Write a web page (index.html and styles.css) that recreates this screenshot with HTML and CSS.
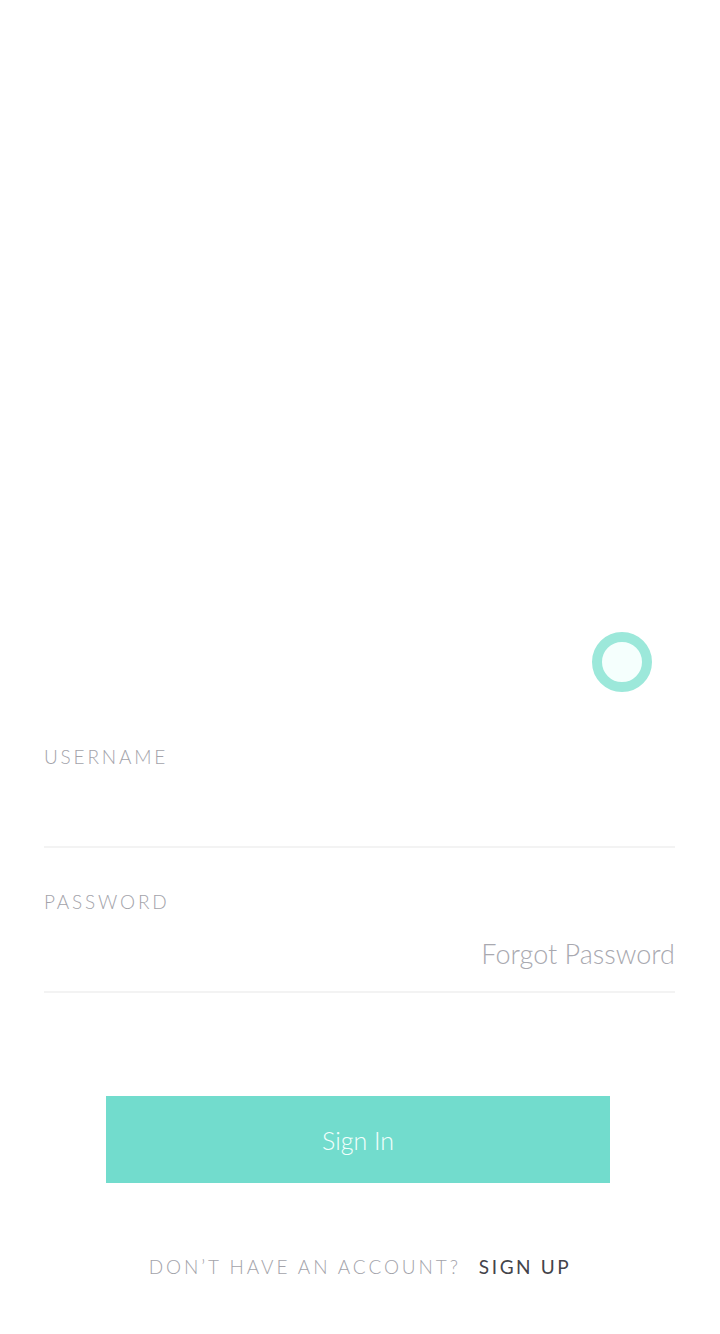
FILE: index.html
```html
<!DOCTYPE html>
<html>
<head>
<meta charset="utf-8">
<link rel="stylesheet" href="styles.css">
</head>
<body>
<div class="page">
  <div class="avatar-row">
    <div class="avatar"></div>
  </div>
  <div class="form">
    <div class="field">
      <div class="label">USERNAME</div>
      <div class="input"></div>
    </div>
    <div class="field">
      <div class="label">PASSWORD</div>
      <div class="input"><span class="forgot">Forgot Password</span></div>
    </div>
  </div>
  <div class="btn-row">
    <div class="btn">Sign In</div>
  </div>
  <div class="signup">
    <span class="muted">DON’T HAVE AN ACCOUNT?</span>
    <span class="dark">SIGN UP</span>
  </div>
</div>
</body>
</html>
```

FILE: styles.css
```css
html, body {
  margin: 0;
  padding: 0;
  background: #ffffff;
}
.page {
  width: 720px;
  height: 1334px;
  font-family: Lato, "Open Sans", sans-serif;
  display: flex;
  flex-direction: column;
}
.avatar-row {
  padding-top: 632px;
  padding-right: 68px;
  display: flex;
  justify-content: flex-end;
}
.avatar {
  width: 40px;
  height: 40px;
  border: 10px solid #9ce8da;
  border-radius: 50%;
  background: #f5fffd;
}
.form {
  padding: 53px 45px 0 44px;
}
.field {
  display: flex;
  flex-direction: column;
  margin-bottom: 42px;
}
.label {
  font-size: 19px;
  line-height: 24px;
  letter-spacing: 2.8px;
  color: #a3a3aa;
  font-weight: 300;
}
.input {
  height: 77px;
  border-bottom: 2px solid #f3f3f3;
  display: flex;
  justify-content: flex-end;
  align-items: flex-end;
}
.forgot {
  font-size: 27px;
  line-height: 32px;
  color: #a9a9b0;
  font-weight: 300;
  padding-bottom: 21px;
}
.btn-row {
  padding-top: 61px;
  display: flex;
  justify-content: center;
}
.btn {
  width: 504px;
  height: 87px;
  margin-left: -4px;
  background: #72dccd;
  color: #f2fffc;
  font-size: 25px;
  font-weight: 300;
  display: flex;
  align-items: center;
  justify-content: center;
}
.signup {
  padding-top: 72px;
  display: flex;
  justify-content: center;
  gap: 18px;
  font-size: 19px;
  letter-spacing: 2.9px;
  font-weight: 300;
}
.muted { color: #a3a3aa; }
.dark { color: #44444a; font-weight: 400; letter-spacing: 2.6px; }
```
